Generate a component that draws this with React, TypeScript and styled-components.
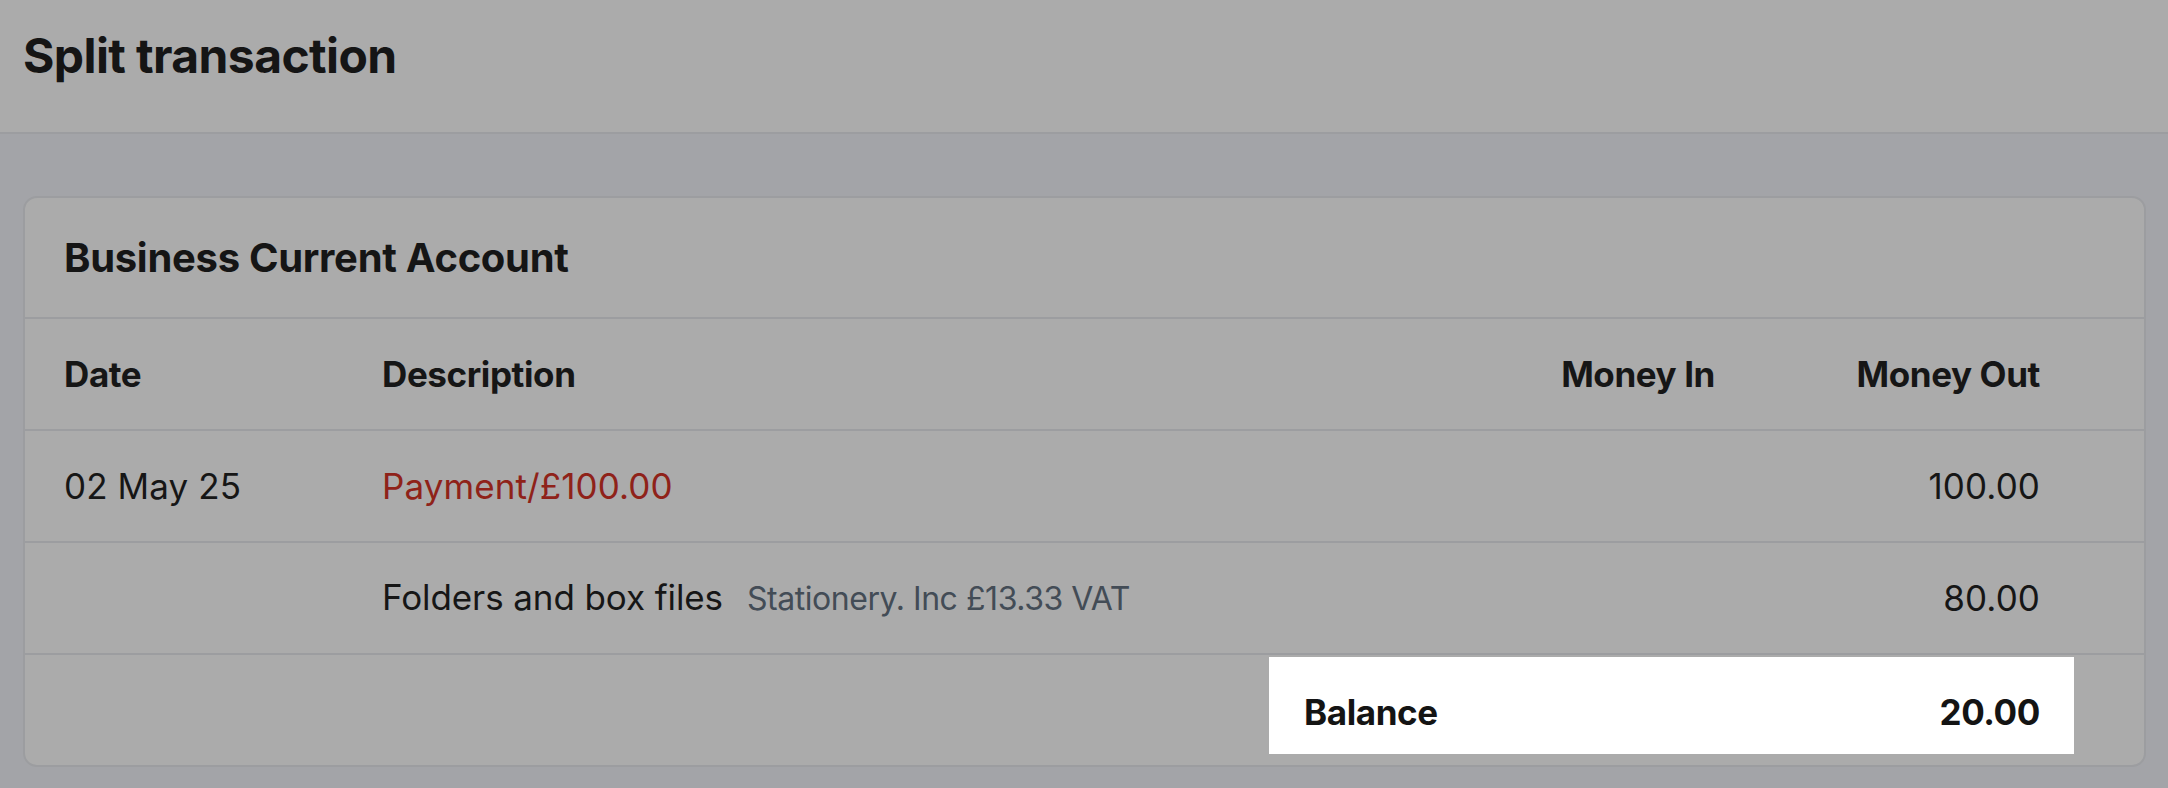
import React from "react";
import styled, { createGlobalStyle } from "styled-components";

const GlobalStyle = createGlobalStyle`
  html, body {
    margin: 0;
    padding: 0;
    background: #a3a4a8;
  }
  body {
    font-family: Inter, "Noto Sans", "Liberation Sans", sans-serif;
    color: #161616;
  }
  * { box-sizing: border-box; }
`;

const Page = styled.div`
  min-height: 788px;
  background: #a3a4a8;
`;

const TopBar = styled.header`
  height: 134px;
  background: #ababab;
  border-bottom: 2px solid #9c9da0;
  padding: 27px 0 0 23px;
`;

const Title = styled.h1`
  margin: 0;
  font-size: 48px;
  line-height: 58px;
  font-weight: 700;
  letter-spacing: -0.6px;
  color: #151515;
`;

const Main = styled.main`
  padding: 62px 22px 0 23px;
`;

const Card = styled.section`
  background: #ababab;
  border: 2px solid #9c9da0;
  border-radius: 14px;
  overflow: hidden;
`;

const CardHeading = styled.h2`
  margin: 0;
  height: 121px;
  display: flex;
  align-items: center;
  padding-left: 39px;
  border-bottom: 2px solid #9c9da0;
  font-size: 40px;
  line-height: 48px;
  font-weight: 700;
  letter-spacing: -0.3px;
  color: #151515;
`;

const Row = styled.div<{ $last?: boolean }>`
  display: grid;
  grid-template-columns: 318px 1fr 480px 325px;
  align-items: ${(p) => (p.$last ? "start" : "center")};
  height: ${(p) => (p.$last ? "110px" : "112px")};
  padding: 0 70px 0 39px;
  border-bottom: ${(p) => (p.$last ? "none" : "2px solid #9c9da0")};
`;

const Cell = styled.div<{ $head?: boolean; $right?: boolean; $tone?: "red" | "dark" }>`
  font-size: 35px;
  line-height: 44px;
  font-weight: ${(p) => (p.$head ? 700 : 400)};
  letter-spacing: ${(p) => (p.$head ? "-0.4px" : "0.1px")};
  text-align: ${(p) => (p.$right ? "right" : "left")};
  padding-right: ${(p) => (p.$right ? "34px" : "0")};
  color: ${(p) => (p.$tone === "red" ? "#8f2219" : "#161616")};
  white-space: nowrap;
`;

const Main2 = styled.span`
  letter-spacing: -0.1px;
`;

const Note = styled.span`
  margin-left: 24px;
  font-size: 32px;
  color: #434c56;
  letter-spacing: -0.45px;
`;

const BalanceBox = styled.div`
  grid-column: 3 / span 2;
  height: 97px;
  margin-top: 2px;
  background: #ffffff;
  display: flex;
  align-items: center;
  justify-content: space-between;
  padding: 12px 34px 0 35px;
  font-size: 35px;
  line-height: 44px;
  font-weight: 700;
  letter-spacing: -0.4px;
  color: #141414;
`;

export default function App() {
  return (
    <Page>
      <GlobalStyle />
      <TopBar>
        <Title>Split transaction</Title>
      </TopBar>
      <Main>
        <Card>
          <CardHeading>Business Current Account</CardHeading>
          <Row>
            <Cell $head>Date</Cell>
            <Cell $head>Description</Cell>
            <Cell $head $right>Money In</Cell>
            <Cell $head $right>Money Out</Cell>
          </Row>
          <Row>
            <Cell>02 May 25</Cell>
            <Cell $tone="red">Payment/£100.00</Cell>
            <Cell $right></Cell>
            <Cell $right>100.00</Cell>
          </Row>
          <Row>
            <Cell></Cell>
            <Cell>
              <Main2>Folders and box files</Main2>
              <Note>Stationery. Inc £13.33 VAT</Note>
            </Cell>
            <Cell $right></Cell>
            <Cell $right>80.00</Cell>
          </Row>
          <Row $last>
            <Cell></Cell>
            <Cell></Cell>
            <BalanceBox>
              <span>Balance</span>
              <span>20.00</span>
            </BalanceBox>
          </Row>
        </Card>
      </Main>
    </Page>
  );
}
